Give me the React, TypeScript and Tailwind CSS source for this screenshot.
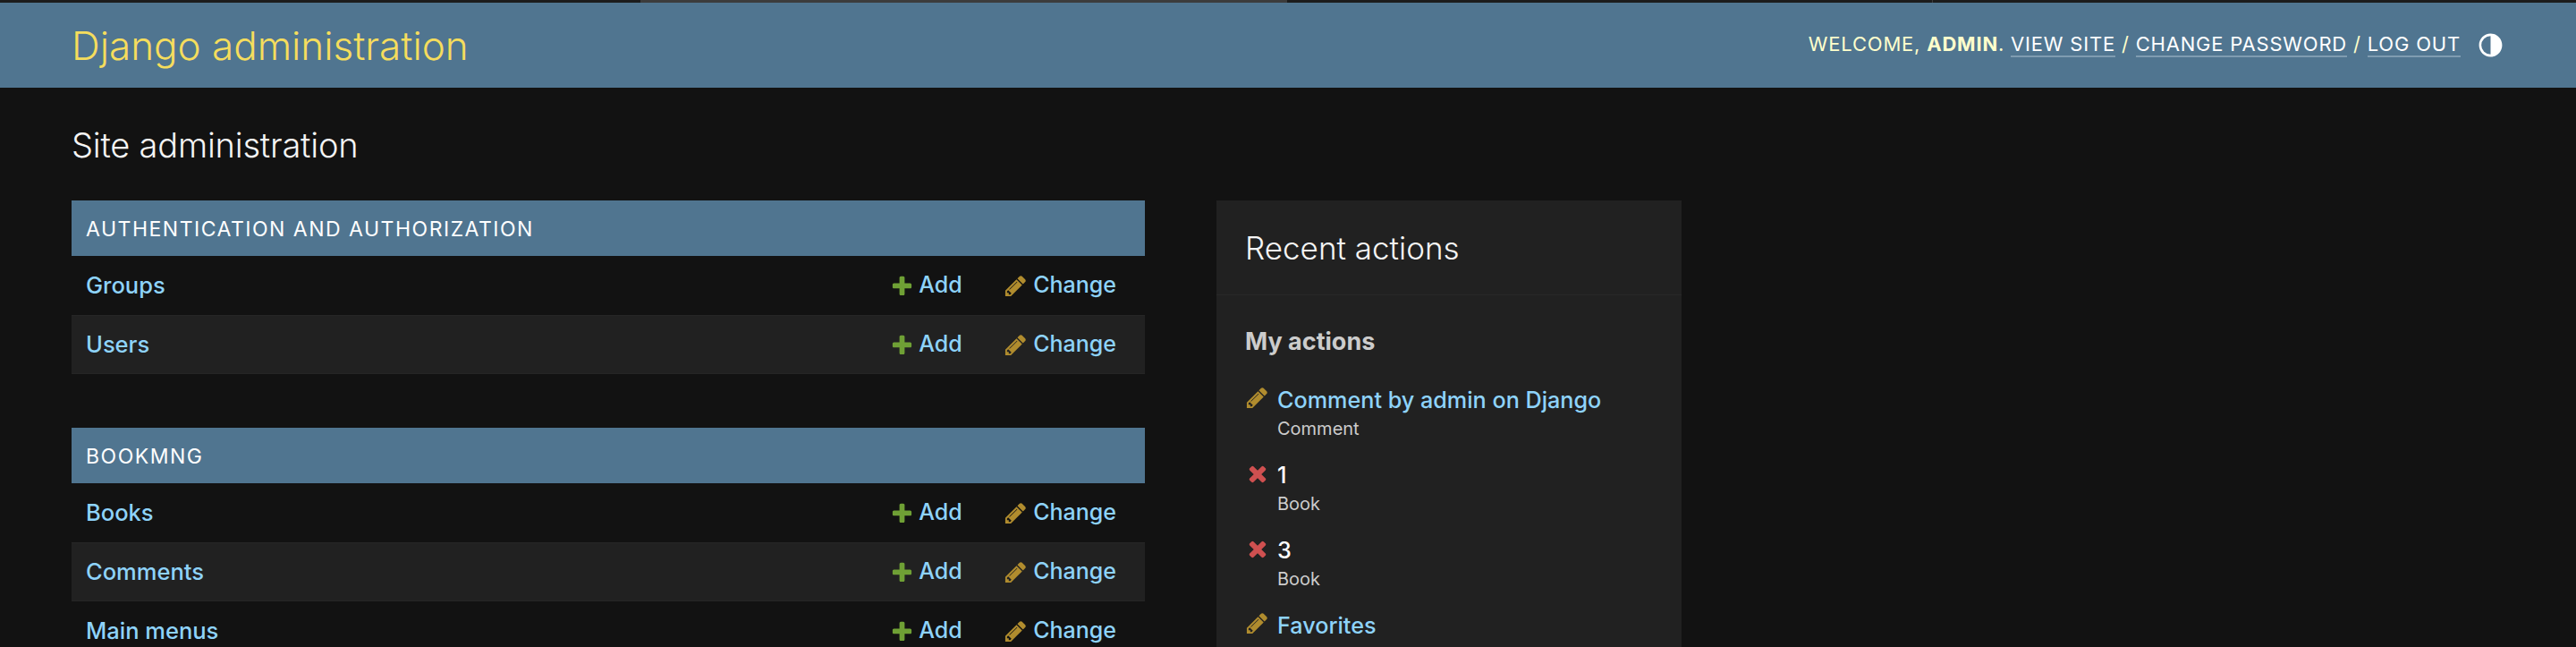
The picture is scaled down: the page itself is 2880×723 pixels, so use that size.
const FONT = "font-['Inter','Liberation_Sans',sans-serif]";

function AddIcon() {
  return (
    <svg viewBox="0 0 1792 1792" className="w-[27px] h-[27px] shrink-0">
      <path fill="#6fa035" d="M1600 796v192q0 40-28 68t-68 28h-416v416q0 40-28 68t-68 28h-192q-40 0-68-28t-28-68v-416h-416q-40 0-68-28t-28-68v-192q0-40 28-68t68-28h416v-416q0-40 28-68t68-28h192q40 0 68 28t28 68v416h416q40 0 68 28t28 68z" />
    </svg>
  );
}

function ChangeIcon() {
  return (
    <svg viewBox="0 0 1792 1792" className="w-[27px] h-[27px] shrink-0">
      <path fill="#b08c2e" d="M491 1536l91-91-235-235-91 91v107h128v128h107zm523-928q0-22-22-22-10 0-17 7l-542 542q-7 7-7 17 0 22 22 22 10 0 17-7l542-542q7-7 7-17zm-54-192l416 416-832 832h-416v-416zm683 96q0 53-37 90l-166 166-416-416 166-165q36-38 90-38 53 0 91 38l235 234q37 39 37 91z" />
    </svg>
  );
}

function DeleteIcon() {
  return (
    <svg viewBox="0 0 1792 1792" className="w-[28px] h-[28px] shrink-0">
      <path fill="#cf5050" d="M1490 1322q0 40-28 68l-136 136q-28 28-68 28t-68-28l-294-294-294 294q-28 28-68 28t-68-28l-136-136q-28-28-28-68t28-68l294-294-294-294q-28-28-28-68t28-68l136-136q28-28 68-28t68 28l294 294 294-294q28-28 68-28t68 28l136 136q28 28 28 68t-28 68l-294 294 294 294q28 28 28 68z" />
    </svg>
  );
}

function ThemeIcon() {
  return (
    <svg viewBox="0 0 24 24" className="w-[31px] h-[31px] shrink-0">
      <path fill="#ffffff" d="M12 22C6.477 22 2 17.523 2 12S6.477 2 12 2s10 4.477 10 10-4.477 10-10 10zm0-2V4a8 8 0 1 0 0 16z" />
    </svg>
  );
}

function Row({ name, alt }: { name: string; alt?: boolean }) {
  return (
    <div className={`flex items-center h-[66px] pl-4 pr-8 text-[25.5px] font-[450] text-[#8ed3fa] ${alt ? "bg-[#212121] border-y border-[#262626]" : ""}`}>
      <span className="flex-1">{name}</span>
      <span className="flex items-center gap-[5px] w-[78px] mr-[49px] text-[25px]">
        <AddIcon />
        <span>Add</span>
      </span>
      <span className="flex items-center gap-[6px] text-[25px]">
        <ChangeIcon />
        <span>Change</span>
      </span>
    </div>
  );
}

function Caption({ text }: { text: string }) {
  return (
    <div className="flex items-center h-[62px] px-4 pt-[2px] bg-[#507590] text-white text-[23px] tracking-[1.5px] uppercase">
      {text}
    </div>
  );
}

function Action({ icon, title, type, link }: { icon: React.ReactNode; title: string; type: string; link?: boolean }) {
  return (
    <div className="flex gap-2 mb-[19px]">
      <div className="w-[28px] pt-[2px] shrink-0">{icon}</div>
      <div>
        <div className={`text-[25.2px] font-[450] leading-[36px] ${link ? "text-[#8ed3fa]" : "text-white"}`}>{title}</div>
        <div className="text-[20px] leading-[29px] text-[#cccccc]">{type}</div>
      </div>
    </div>
  );
}

export default function App() {
  return (
    <div className={`h-[723px] overflow-hidden bg-[#121212] ${FONT}`}>
      <div className="flex h-[3px] bg-[#1c1c1c]">
        <div className="w-[716px]" />
        <div className="w-[722px] bg-[#3c3c3c]" />
        <div className="w-[722px] border-l border-[#3c3c3c]" />
        <div className="flex-1 border-l border-[#3c3c3c]" />
      </div>
      <header className="flex items-center justify-between h-[95px] pl-[80px] pr-[80px] bg-[#507590]">
        <h1 className="text-[44px] font-light text-[#f5dd5d]">Django administration</h1>
        <div className="flex items-center gap-[18px] text-[22px] tracking-[0.8px] uppercase text-[#ffffcc]">
          <div className="font-normal pb-[3px]">
            Welcome, <strong className="font-bold">admin</strong>.{" "}
            <a className="text-white border-b-2 border-[#7f9cb1]">View site</a> /{" "}
            <a className="text-white border-b-2 border-[#7f9cb1]">Change password</a> /{" "}
            <a className="text-white border-b-2 border-[#7f9cb1]">Log out</a>
          </div>
          <ThemeIcon />
        </div>
      </header>
      <main className="px-[80px] pt-[40px]">
        <h2 className="h-[86px] text-[38px] leading-[48px] font-light tracking-[-0.2px] text-[#f5f5f5]">Site administration</h2>
        <div className="flex gap-[80px] items-start">
          <div className="w-[1200px] shrink-0">
            <section className="mb-[60px]">
              <Caption text="Authentication and Authorization" />
              <Row name="Groups" />
              <Row name="Users" alt />
            </section>
            <section>
              <Caption text="Bookmng" />
              <Row name="Books" />
              <Row name="Comments" alt />
              <Row name="Main menus" />
            </section>
          </div>
          <aside className="w-[520px] shrink-0 bg-[#212121]">
            <div className="h-[106px] flex items-center pt-[2px] px-8 border-b border-[#282828] text-[35px] font-light text-[#f5f5f5]">
              Recent actions
            </div>
            <div className="px-8 pt-[32px]">
              <h3 className="text-[27px] font-bold leading-[40px] text-[#cccccc] mb-[27px]">My actions</h3>
              <Action icon={<ChangeIcon />} title="Comment by admin on Django" type="Comment" link />
              <Action icon={<DeleteIcon />} title="1" type="Book" />
              <Action icon={<DeleteIcon />} title="3" type="Book" />
              <Action icon={<ChangeIcon />} title="Favorites" type="Favorite" link />
            </div>
          </aside>
        </div>
      </main>
    </div>
  );
}
